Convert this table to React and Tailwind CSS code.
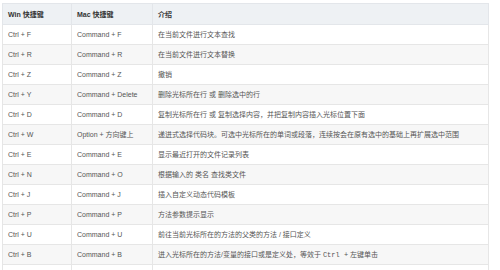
const ROWS = [
  ["Ctrl + F", "Command + F", "在当前文件进行文本查找"],
  ["Ctrl + R", "Command + R", "在当前文件进行文本替换"],
  ["Ctrl + Z", "Command + Z", "撤销"],
  ["Ctrl + Y", "Command + Delete", "删除光标所在行 或 删除选中的行"],
  ["Ctrl + D", "Command + D", "复制光标所在行 或 复制选择内容，并把复制内容插入光标位置下面"],
  ["Ctrl + W", "Option + 方向键上", "递进式选择代码块。可选中光标所在的单词或段落，连续按会在原有选中的基础上再扩展选中范围"],
  ["Ctrl + E", "Command + E", "显示最近打开的文件记录列表"],
  ["Ctrl + N", "Command + O", "根据输入的 类名 查找类文件"],
  ["Ctrl + J", "Command + J", "插入自定义动态代码模板"],
  ["Ctrl + P", "Command + P", "方法参数提示显示"],
  ["Ctrl + U", "Command + U", "前往当前光标所在的方法的父类的方法 / 接口定义"],
  ["Ctrl + B", "Command + B", null],
  ["", "", ""],
];

export default function App() {
  return (
    <div
      className="w-[500px] h-[270px] overflow-hidden bg-white pt-[3px] pl-[2px]"
      style={{ fontFamily: '"Liberation Sans", "Noto Sans CJK SC", sans-serif' }}
    >
      <table className="w-[487px] table-fixed border-collapse text-[7px] leading-none">
        <colgroup>
          <col className="w-[69px]" />
          <col className="w-[81px]" />
          <col />
        </colgroup>
        <thead>
          <tr className="h-[21px] bg-[#eef1f4]">
            <th className="border border-[#e3e6ea] px-[5px] text-left font-bold text-[#333]">Win 快捷键</th>
            <th className="border border-[#e3e6ea] px-[5px] text-left font-bold text-[#333]">Mac 快捷键</th>
            <th className="border border-[#e3e6ea] px-[5px] text-left font-bold text-[#333]">介绍</th>
          </tr>
        </thead>
        <tbody>
          {ROWS.map((r, i) => (
            <tr key={i} className={`h-[20px] ${i % 2 ? "bg-[#f7f7f7]" : "bg-white"}`}>
              <td className="border border-[#e6e6e6] px-[5px] text-[#555] whitespace-nowrap">{r[0]}</td>
              <td className="border border-[#e6e6e6] px-[5px] text-[#555] whitespace-nowrap">{r[1]}</td>
              <td className="border border-[#e6e6e6] px-[5px] text-[#555] whitespace-nowrap">
                {r[2] ?? (
                  <>
                    进入光标所在的方法/变量的接口或是定义处，等效于{" "}
                    <span style={{ fontFamily: '"Liberation Mono", monospace' }}>Ctrl +</span> 左键单击
                  </>
                )}
              </td>
            </tr>
          ))}
        </tbody>
      </table>
    </div>
  );
}
